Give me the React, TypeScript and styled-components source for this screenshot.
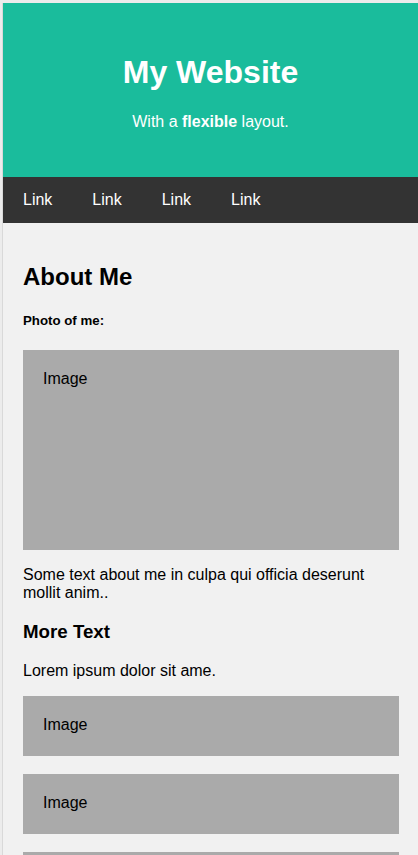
import React from "react";
import styled, { createGlobalStyle } from "styled-components";

const Global = createGlobalStyle`
  html, body { margin: 0; padding: 0; }
  body {
    background: #ececec;
    font-family: "Liberation Sans", Arial, sans-serif;
    overflow: hidden;
  }
  * { box-sizing: border-box; }
`;

const Frame = styled.div`
  padding: 3px 0 0 2px;
  min-height: 855px;
`;

const Page = styled.div`
  border-left: 1px solid #d9d9d9;
  background: #f1f1f1;
  min-height: 852px;
`;

const Header = styled.header`
  background: #1abc9c;
  color: #fff;
  text-align: center;
  padding: 30px;
`;

const Title = styled.h1`
  font-size: 32px;
  margin: 21.44px 0;
  font-weight: bold;
`;

const Tagline = styled.p`
  font-size: 16px;
  margin: 16px 0;
`;

const Nav = styled.nav`
  background: #333;
  display: flex;
  height: 46px;
  align-items: center;
`;

const NavLink = styled.a`
  color: #fff;
  text-decoration: none;
  font-size: 16px;
  padding: 0 20px;
`;

const Main = styled.main`
  padding: 20px 19px 20px 20px;
  color: #000;
`;

const H2 = styled.h2`
  font-size: 24px;
  margin: 19.92px 0;
`;

const H5 = styled.h5`
  font-size: 13.28px;
  margin: 22.18px 0;
`;

const H3 = styled.h3`
  font-size: 18.72px;
  margin: 18.72px 0;
`;

const Para = styled.p`
  font-size: 16px;
  margin: 16px 0;
`;

const FakeImg = styled.div<{ $h: number }>`
  background: #aaa;
  padding: 20px;
  height: ${(p) => p.$h}px;
  font-size: 16px;
`;

const Spacer = styled.div`
  height: 18.4px;
`;

export default function App() {
  return (
    <>
      <Global />
      <Frame>
        <Page>
          <Header>
            <Title>My Website</Title>
            <Tagline>
              With a <b>flexible</b> layout.
            </Tagline>
          </Header>
          <Nav>
            <NavLink href="#">Link</NavLink>
            <NavLink href="#">Link</NavLink>
            <NavLink href="#">Link</NavLink>
            <NavLink href="#">Link</NavLink>
          </Nav>
          <Main>
            <H2>About Me</H2>
            <H5>Photo of me:</H5>
            <FakeImg $h={200}>Image</FakeImg>
            <Para>Some text about me in culpa qui officia deserunt mollit anim..</Para>
            <H3>More Text</H3>
            <Para>Lorem ipsum dolor sit ame.</Para>
            <FakeImg $h={60}>Image</FakeImg>
            <Spacer />
            <FakeImg $h={60}>Image</FakeImg>
            <Spacer />
            <FakeImg $h={60} />
          </Main>
        </Page>
      </Frame>
    </>
  );
}
